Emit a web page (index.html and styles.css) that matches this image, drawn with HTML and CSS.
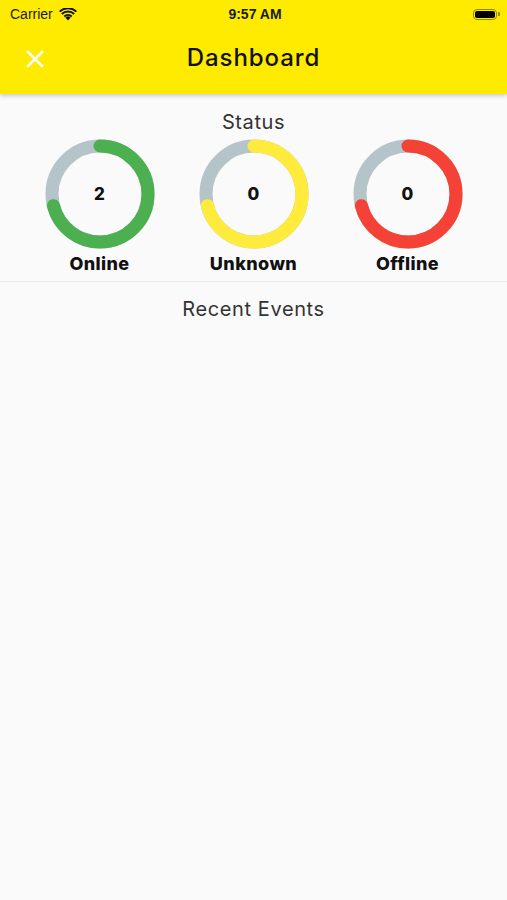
FILE: index.html
```html
<!DOCTYPE html>
<html lang="en">
<head>
  <meta charset="UTF-8">
  <meta name="viewport" content="width=device-width, initial-scale=1.0">
  <title>Dashboard</title>
  <link rel="stylesheet" href="styles.css">
</head>
<body>

  <header class="appbar">
    <div class="statusbar">
      <div class="carrier">
        Carrier
        <svg class="wifi" width="18" height="13" viewBox="0 0 18 13">
          <path d="M9 12.5 L6.3 9.6 A4 4 0 0 1 11.7 9.6 Z" fill="#111"/>
          <path d="M4.6 7.8 A6.4 6.4 0 0 1 13.4 7.8 L12.1 9.2 A4.6 4.6 0 0 0 5.9 9.2 Z" fill="#111"/>
          <path d="M2.2 5.3 A9.8 9.8 0 0 1 15.8 5.3 L14.5 6.7 A7.9 7.9 0 0 0 3.5 6.7 Z" fill="#111"/>
          <path d="M0 2.9 A13 13 0 0 1 18 2.9 L16.7 4.3 A11.1 11.1 0 0 0 1.3 4.3 Z" fill="#111"/>
        </svg>
      </div>
      <div class="time">9:57 AM</div>
      <div class="battery">
        <span class="battery-body"><span class="battery-level"></span></span>
        <span class="battery-nub"></span>
      </div>
    </div>
    <div class="toolbar">
      <button class="close-btn" aria-label="Close">
        <svg width="18" height="18" viewBox="0 0 18 18">
          <path d="M2 2 L16 16 M16 2 L2 16" stroke="#fff" stroke-width="2.6" stroke-linecap="square"/>
        </svg>
      </button>
      <h1 class="title">Dashboard</h1>
    </div>
  </header>

  <main>
    <section class="status">
      <h2 class="section-title">Status</h2>
      <div class="rings">
        <div class="ring-item">
          <div class="ring">
            <svg width="112" height="112" viewBox="0 0 112 112">
              <circle cx="56" cy="56" r="48" class="track"/>
              <circle cx="56" cy="56" r="48" class="arc green" transform="rotate(-90 56 56)"/>
            </svg>
            <span class="ring-value">2</span>
          </div>
          <div class="ring-label">Online</div>
        </div>
        <div class="ring-item">
          <div class="ring">
            <svg width="112" height="112" viewBox="0 0 112 112">
              <circle cx="56" cy="56" r="48" class="track"/>
              <circle cx="56" cy="56" r="48" class="arc yellow" transform="rotate(-90 56 56)"/>
            </svg>
            <span class="ring-value">0</span>
          </div>
          <div class="ring-label">Unknown</div>
        </div>
        <div class="ring-item">
          <div class="ring">
            <svg width="112" height="112" viewBox="0 0 112 112">
              <circle cx="56" cy="56" r="48" class="track"/>
              <circle cx="56" cy="56" r="48" class="arc red" transform="rotate(-90 56 56)"/>
            </svg>
            <span class="ring-value">0</span>
          </div>
          <div class="ring-label">Offline</div>
        </div>
      </div>
    </section>

    <section class="events">
      <h2 class="section-title">Recent Events</h2>
    </section>
  </main>

</body>
</html>
```

FILE: styles.css
```css
body {
  margin: 0;
  font-family: "Inter", "Noto Sans", sans-serif;
  background-color: #fafafa;
  color: #222;
  height: 900px;
  overflow: hidden;
}
.appbar {
  background-color: #ffeb00;
  height: 94px;
  box-shadow: 0 2px 4px rgba(0, 0, 0, 0.18);
  position: relative;
  z-index: 1;
}
.statusbar {
  height: 28px;
  display: flex;
  align-items: center;
  justify-content: space-between;
  padding: 0 7px 0 10px;
  font-family: "Liberation Sans", Arial, sans-serif;
  font-size: 14px;
  color: #1a1a1a;
}
.carrier {
  display: flex;
  align-items: center;
  gap: 6px;
  width: 100px;
}
.time {
  font-weight: bold;
}
.battery {
  width: 100px;
  display: flex;
  justify-content: flex-end;
  align-items: center;
}
.battery-body {
  width: 24px;
  height: 11px;
  border: 1.5px solid #8e8a00;
  border-radius: 4px;
  padding: 1px;
  box-sizing: border-box;
  display: flex;
}
.battery-level {
  flex: 1;
  background: #000;
  border-radius: 2px;
}
.battery-nub {
  width: 2px;
  height: 4px;
  background: #8e8a00;
  border-radius: 0 1px 1px 0;
  margin-left: 1px;
}
.toolbar {
  height: 62px;
  display: flex;
  align-items: center;
  justify-content: center;
  position: relative;
}
.close-btn {
  position: absolute;
  left: 26px;
  top: 22px;
  background: none;
  border: none;
  padding: 0;
  width: 18px;
  height: 18px;
  cursor: pointer;
}
.title {
  margin: 0 0 4px;
  font-size: 24px;
  font-weight: 500;
  color: #111;
  letter-spacing: 0.9px;
}
.status {
  padding-top: 14px;
  border-bottom: 1px solid #ececec;
  padding-bottom: 5px;
}
.section-title {
  margin: 0;
  text-align: center;
  font-size: 20px;
  font-weight: 400;
  color: #333;
  line-height: 28px;
  letter-spacing: 0.6px;
}
.rings {
  display: grid;
  grid-template-columns: repeat(3, 154px);
  justify-content: center;
  margin-top: 2px;
}
.ring-item {
  display: flex;
  flex-direction: column;
  align-items: center;
}
.ring {
  position: relative;
  width: 112px;
  height: 112px;
}
.ring svg {
  display: block;
}
.track {
  fill: none;
  stroke: #b4c4c9;
  stroke-width: 13;
}
.arc {
  fill: none;
  stroke-width: 13;
  stroke-linecap: round;
  stroke-dasharray: 214 302;
}
.arc.green { stroke: #4caf50; }
.arc.yellow { stroke: #ffeb3b; }
.arc.red { stroke: #f44336; }
.ring-value {
  position: absolute;
  inset: 0;
  display: flex;
  align-items: center;
  justify-content: center;
  font-size: 17px;
  font-weight: 800;
  color: #111;
}
.ring-label {
  font-size: 18px;
  font-weight: 800;
  color: #111;
  line-height: 24px;
  letter-spacing: 0.4px;
  margin-top: 2px;
}
.events {
  padding-top: 13px;
}
```
